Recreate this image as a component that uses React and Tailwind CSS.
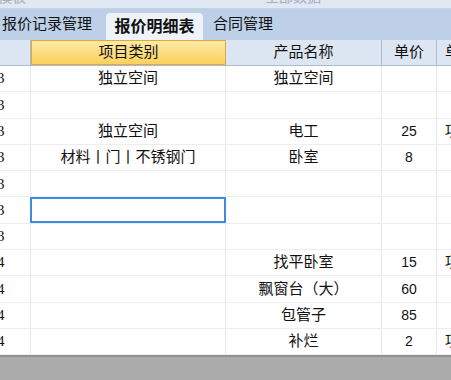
import React from "react";

const rows = [
  { no: "3", cat: "独立空间", name: "独立空间", price: "", unit: "" },
  { no: "3", cat: "", name: "", price: "", unit: "" },
  { no: "3", cat: "独立空间", name: "电工", price: "25", unit: "项" },
  { no: "3", cat: "材料丨门丨不锈钢门", name: "卧室", price: "8", unit: "" },
  { no: "3", cat: "", name: "", price: "", unit: "" },
  { no: "3", cat: "", name: "", price: "", unit: "", selected: true },
  { no: "3", cat: "", name: "", price: "", unit: "" },
  { no: "4", cat: "", name: "找平卧室", price: "15", unit: "项" },
  { no: "4", cat: "", name: "飘窗台（大）", price: "60", unit: "" },
  { no: "4", cat: "", name: "包管子", price: "85", unit: "" },
  { no: "4", cat: "", name: "补烂", price: "2", unit: "项" },
];

const cols = "grid grid-cols-[31px_195px_156px_55px_60px]";

export default function App() {
  return (
    <div
      className="w-[451px] h-[380px] overflow-hidden flex flex-col bg-white text-[15px] text-[#111]"
      style={{ fontFamily: '"Liberation Sans", "Noto Sans CJK SC", sans-serif' }}
    >
      {/* top strip, mostly scrolled away */}
      <div className="h-[9px] shrink-0 bg-[#dfe8f3] border-b border-[#c3d2e4] overflow-hidden relative text-[#a3afbd] text-[14px] leading-[14px]">
        <span className="absolute left-[-2px] top-[-10px]">模板</span>
        <span className="absolute left-[265px] top-[-10px]">全部数据</span>
      </div>

      {/* tabs */}
      <div className="h-[31px] shrink-0 bg-[#bdd0e7] flex items-end">
        <div className="h-full flex items-center pl-[2px] w-[106px]">报价记录管理</div>
        <div className="h-[27px] w-[97px] bg-[#eef3fa] rounded-t-[4px] flex items-center justify-center font-bold text-[16px]">
          报价明细表
        </div>
        <div className="h-full flex items-center pl-[10px]">合同管理</div>
      </div>

      {/* header */}
      <div className={`${cols} h-[26px] shrink-0 bg-[#dce6f2] border-b border-[#a9bcd3]`}>
        <div className="border-r border-[#a9bcd3]" />
        <div className="border border-[#e3a73c] bg-gradient-to-b from-[#fdeaa4] to-[#fbd15a] flex items-center justify-center">
          项目类别
        </div>
        <div className="border-r border-[#a9bcd3] flex items-center justify-center">产品名称</div>
        <div className="border-r border-[#a9bcd3] flex items-center justify-center">单价</div>
        <div className="flex items-center pl-[8px] whitespace-nowrap">单位</div>
      </div>

      {/* rows */}
      <div className="shrink-0">
        {rows.map((r, i) => (
          <div key={i} className={`${cols} h-[26.3px] border-b border-[#ededed]`}>
            <div
              className="border-r border-[#e6e6e6] flex items-center overflow-hidden"
              style={{ fontFamily: '"Liberation Serif", serif' }}
            >
              <span className="ml-[-3px]">{r.no}</span>
            </div>
            <div
              className={
                r.selected
                  ? "border-2 border-[#3a8de6] ml-[-1px]"
                  : "border-r border-[#e6e6e6] flex items-center justify-center whitespace-nowrap"
              }
            >
              {r.cat}
            </div>
            <div className="border-r border-[#e6e6e6] flex items-center justify-center whitespace-nowrap">
              {r.name}
            </div>
            <div className="border-r border-[#e6e6e6] flex items-center justify-center text-[14px]">
              {r.price}
            </div>
            <div className="flex items-center pl-[8px]">{r.unit}</div>
          </div>
        ))}
      </div>

      {/* bottom empty area */}
      <div className="flex-1 bg-[#ababab] border-t-2 border-[#8f8f8f]" />
    </div>
  );
}
